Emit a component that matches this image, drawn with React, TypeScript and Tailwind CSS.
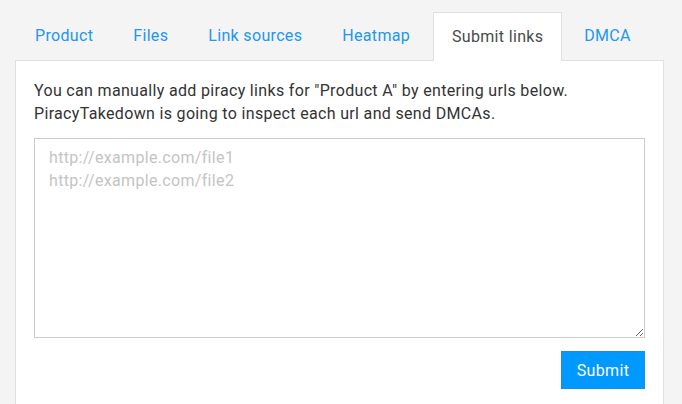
import React from "react";

const tabs = ["Product", "Files", "Link sources", "Heatmap", "Submit links", "DMCA"];

export default function App() {
  return (
    <div
      className="w-[682px] h-[404px] bg-[#f4f4f4] overflow-hidden pt-3 pl-[15px] pr-[18px] tracking-[0.33px]"
      style={{ fontFamily: "Roboto, 'Liberation Sans', sans-serif" }}
    >
      <div className="flex h-[48px]">
        {tabs.map((t) =>
          t === "Submit links" ? (
            <div
              key={t}
              className="relative z-10 ml-[3px] w-[129px] h-[49px] flex items-center justify-center bg-white border border-[#e0e0e0] border-b-0 text-[16px] text-[#4a4a4a]"
            >
              {t}
            </div>
          ) : (
            <div
              key={t}
              className={
                t === "DMCA"
                  ? "h-[48px] pl-[22px] pr-5 flex items-center text-[16px] text-[#2196f3]"
                  : "h-[48px] px-5 flex items-center text-[16px] text-[#2196f3]"
              }
            >
              {t}
            </div>
          )
        )}
      </div>
      <div className="bg-white border border-[#e0e0e0] h-[400px] p-[18px] text-[16px] leading-[23px] text-[#333]">
        <p>
          You can manually add piracy links for "Product A" by entering urls below.
          <br />
          PiracyTakedown is going to inspect each url and send DMCAs.
        </p>
        <textarea
          className="mt-[13px] block w-full h-[200px] border border-[#ccc] px-[14px] py-[7px] text-[16px] leading-[23px] tracking-[0.33px] text-[#333] placeholder:text-[#c4c4c4] outline-none"
          placeholder={"http://example.com/file1\nhttp://example.com/file2"}
          style={{ fontFamily: "Roboto, 'Liberation Sans', sans-serif" }}
        />
        <div className="flex justify-end mt-[13px]">
          <button className="w-[84px] h-[38px] bg-[#0099ff] border border-[#1a8de0] text-white text-[16px] tracking-[0.33px]">
            Submit
          </button>
        </div>
      </div>
    </div>
  );
}
